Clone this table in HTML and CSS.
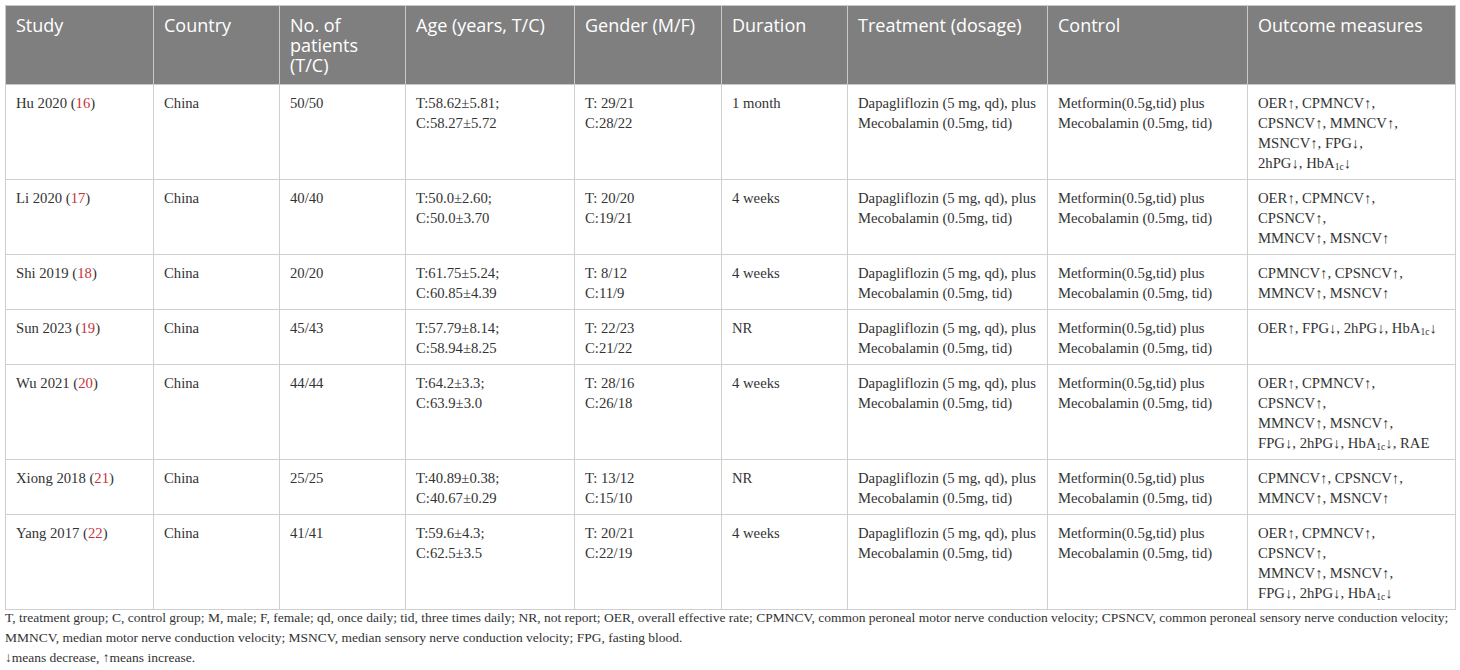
FILE: index.html
```html
<!DOCTYPE html>
<html>
<head>
<meta charset="utf-8">
<link rel="stylesheet" href="styles.css">
</head>
<body>
<div class="wrap">
<table class="tbl">
<colgroup>
<col class="c1"><col class="c2"><col class="c3"><col class="c4"><col class="c5"><col class="c6"><col class="c7"><col class="c8"><col class="c9">
</colgroup>
<thead>
<tr>
<th>Study</th><th>Country</th><th>No. of patients (T/C)</th><th>Age (years, T/C)</th><th>Gender (M/F)</th><th>Duration</th><th>Treatment (dosage)</th><th>Control</th><th>Outcome measures</th>
</tr>
</thead>
<tbody>
<tr>
<td>Hu 2020 (<span class="ref">16</span>)</td><td>China</td><td>50/50</td><td>T:58.62±5.81;<br>C:58.27±5.72</td><td>T: 29/21<br>C:28/22</td><td>1 month</td><td>Dapagliflozin (5 mg, qd), plus<br>Mecobalamin (0.5mg, tid)</td><td>Metformin(0.5g,tid) plus<br>Mecobalamin (0.5mg, tid)</td><td>OER↑, CPMNCV↑,<br>CPSNCV↑, MMNCV↑,<br>MSNCV↑, FPG↓,<br>2hPG↓, HbA<sub>1c</sub>↓</td>
</tr>
<tr>
<td>Li 2020 (<span class="ref">17</span>)</td><td>China</td><td>40/40</td><td>T:50.0±2.60;<br>C:50.0±3.70</td><td>T: 20/20<br>C:19/21</td><td>4 weeks</td><td>Dapagliflozin (5 mg, qd), plus<br>Mecobalamin (0.5mg, tid)</td><td>Metformin(0.5g,tid) plus<br>Mecobalamin (0.5mg, tid)</td><td>OER↑, CPMNCV↑,<br>CPSNCV↑,<br>MMNCV↑, MSNCV↑</td>
</tr>
<tr>
<td>Shi 2019 (<span class="ref">18</span>)</td><td>China</td><td>20/20</td><td>T:61.75±5.24;<br>C:60.85±4.39</td><td>T: 8/12<br>C:11/9</td><td>4 weeks</td><td>Dapagliflozin (5 mg, qd), plus<br>Mecobalamin (0.5mg, tid)</td><td>Metformin(0.5g,tid) plus<br>Mecobalamin (0.5mg, tid)</td><td>CPMNCV↑, CPSNCV↑,<br>MMNCV↑, MSNCV↑</td>
</tr>
<tr>
<td>Sun 2023 (<span class="ref">19</span>)</td><td>China</td><td>45/43</td><td>T:57.79±8.14;<br>C:58.94±8.25</td><td>T: 22/23<br>C:21/22</td><td>NR</td><td>Dapagliflozin (5 mg, qd), plus<br>Mecobalamin (0.5mg, tid)</td><td>Metformin(0.5g,tid) plus<br>Mecobalamin (0.5mg, tid)</td><td>OER↑, FPG↓, 2hPG↓, HbA<sub>1c</sub>↓</td>
</tr>
<tr>
<td>Wu 2021 (<span class="ref">20</span>)</td><td>China</td><td>44/44</td><td>T:64.2±3.3;<br>C:63.9±3.0</td><td>T: 28/16<br>C:26/18</td><td>4 weeks</td><td>Dapagliflozin (5 mg, qd), plus<br>Mecobalamin (0.5mg, tid)</td><td>Metformin(0.5g,tid) plus<br>Mecobalamin (0.5mg, tid)</td><td>OER↑, CPMNCV↑,<br>CPSNCV↑,<br>MMNCV↑, MSNCV↑,<br>FPG↓, 2hPG↓, HbA<sub>1c</sub>↓, RAE</td>
</tr>
<tr>
<td>Xiong 2018 (<span class="ref">21</span>)</td><td>China</td><td>25/25</td><td>T:40.89±0.38;<br>C:40.67±0.29</td><td>T: 13/12<br>C:15/10</td><td>NR</td><td>Dapagliflozin (5 mg, qd), plus<br>Mecobalamin (0.5mg, tid)</td><td>Metformin(0.5g,tid) plus<br>Mecobalamin (0.5mg, tid)</td><td>CPMNCV↑, CPSNCV↑,<br>MMNCV↑, MSNCV↑</td>
</tr>
<tr>
<td>Yang 2017 (<span class="ref">22</span>)</td><td>China</td><td>41/41</td><td>T:59.6±4.3;<br>C:62.5±3.5</td><td>T: 20/21<br>C:22/19</td><td>4 weeks</td><td>Dapagliflozin (5 mg, qd), plus<br>Mecobalamin (0.5mg, tid)</td><td>Metformin(0.5g,tid) plus<br>Mecobalamin (0.5mg, tid)</td><td>OER↑, CPMNCV↑,<br>CPSNCV↑,<br>MMNCV↑, MSNCV↑,<br>FPG↓, 2hPG↓, HbA<sub>1c</sub>↓</td>
</tr>
</tbody>
</table>
<div class="notes">
<p>T, treatment group; C, control group; M, male; F, female; qd, once daily; tid, three times daily; NR, not report; OER, overall effective rate; CPMNCV, common peroneal motor nerve conduction velocity; CPSNCV, common peroneal sensory nerve conduction velocity; MMNCV, median motor nerve conduction velocity; MSNCV, median sensory nerve conduction velocity; FPG, fasting blood.</p>
<p>↓means decrease, ↑means increase.</p>
</div>
</div>
</body>
</html>
```
FILE: styles.css
```css
html, body {
  margin: 0;
  padding: 0;
  background: #ffffff;
}
.wrap {
  padding: 5px;
  width: 1450px;
}
.tbl {
  border-collapse: collapse;
  table-layout: fixed;
  width: 1450px;
  font-family: "Liberation Serif", "Times New Roman", serif;
  font-size: 14.7px;
  color: #333333;
}
.c1 { width: 148px; }
.c2 { width: 126px; }
.c3 { width: 126px; }
.c4 { width: 169px; }
.c5 { width: 147px; }
.c6 { width: 126px; }
.c7 { width: 200px; }
.c8 { width: 200px; }
.c9 { width: 208px; }
.tbl th {
  background: #7f7f7f;
  color: #ffffff;
  font-family: "Open Sans", "Noto Sans", sans-serif;
  font-weight: normal;
  font-size: 18px;
  line-height: 20px;
  text-align: left;
  vertical-align: top;
  padding: 9px 10px 9px 10px;
  height: 60px;
  border: 1px solid #c9c9c9;
}
.tbl td {
  vertical-align: top;
  text-align: left;
  line-height: 20px;
  padding: 8px 10px 6px 10px;
  border: 1px solid #cfcfcf;
  white-space: nowrap;
}
.ref {
  color: #c8323c;
}
sub {
  font-size: 9.5px;
  line-height: 0;
  vertical-align: -2px;
}
.notes {
  font-family: "Liberation Serif", "Times New Roman", serif;
  font-size: 13.5px;
  line-height: 20px;
  color: #333333;
  margin-top: -2px;
}
.notes p {
  margin: 0;
}
```
